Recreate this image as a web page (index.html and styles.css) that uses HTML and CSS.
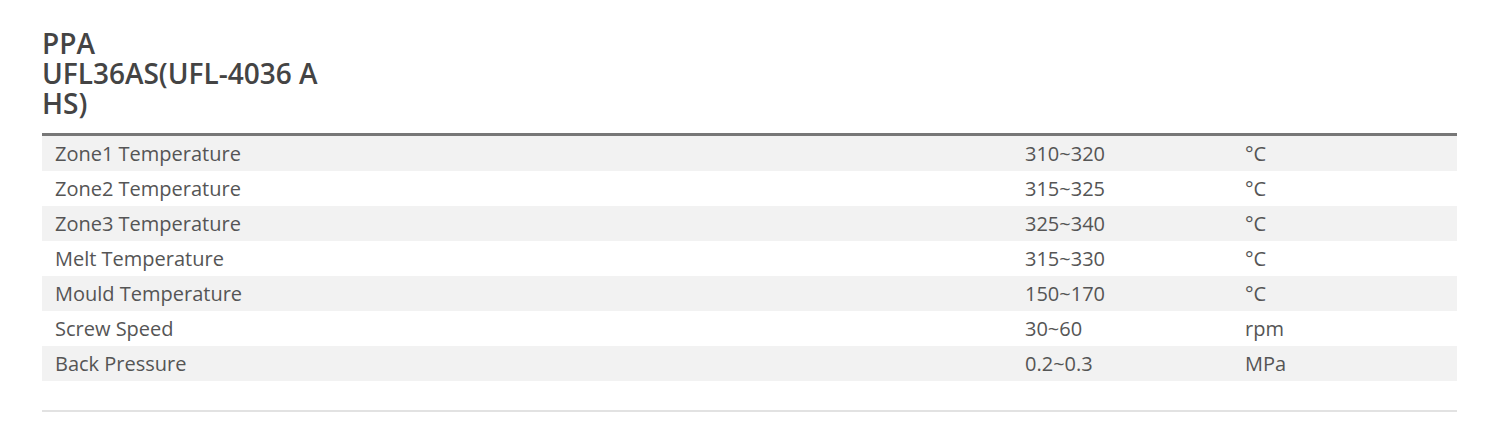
FILE: index.html
```html
<!DOCTYPE html>
<html>
<head>
<meta charset="utf-8">
<link rel="stylesheet" href="styles.css">
</head>
<body>
<div class="page">
  <div class="head">
    <h1 class="title">PPA<br>UFL36AS(UFL-4036 A HS)</h1>
  </div>
  <div class="table">
    <div class="row"><span>Zone1 Temperature</span><span>310~320</span><span>°C</span></div>
    <div class="row"><span>Zone2 Temperature</span><span>315~325</span><span>°C</span></div>
    <div class="row"><span>Zone3 Temperature</span><span>325~340</span><span>°C</span></div>
    <div class="row"><span>Melt Temperature</span><span>315~330</span><span>°C</span></div>
    <div class="row"><span>Mould Temperature</span><span>150~170</span><span>°C</span></div>
    <div class="row"><span>Screw Speed</span><span>30~60</span><span>rpm</span></div>
    <div class="row"><span>Back Pressure</span><span>0.2~0.3</span><span>MPa</span></div>
  </div>
  <div class="rule"></div>
</div>
</body>
</html>
```
FILE: styles.css
```css
html, body {
  margin: 0;
  padding: 0;
  background: #fff;
}
.page {
  padding: 28px 0 0 42px;
  width: 1415px;
  font-family: "Open Sans", "Liberation Sans", sans-serif;
  color: #555;
}
.head {
  padding-bottom: 15px;
  border-bottom: 3px solid #777;
}
.title {
  margin: 0;
  width: 290px;
  font-size: 28px;
  line-height: 30px;
  font-weight: 600;
  color: #444;
}
.table {
  display: flex;
  flex-direction: column;
}
.row {
  display: grid;
  grid-template-columns: 970px 220px 1fr;
  height: 35px;
  align-items: center;
  padding-left: 13px;
  font-size: 20px;
}
.row:nth-child(odd) {
  background: #f2f2f2;
}
.rule {
  margin-top: 29px;
  height: 2px;
  background: #e2e2e2;
}
```
